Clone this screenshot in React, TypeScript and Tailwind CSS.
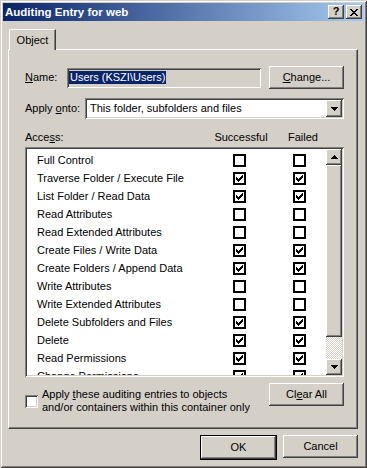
import React from "react";

const raised =
  "shadow-[inset_-1px_-1px_#404040,inset_1px_1px_#ffffff,inset_-2px_-2px_#808080,inset_2px_2px_#d4d0c8]";
const sunken =
  "shadow-[inset_1px_1px_#808080,inset_-1px_-1px_#ffffff,inset_2px_2px_#404040,inset_-2px_-2px_#d4d0c8]";

const rows: [string, boolean, boolean][] = [
  ["Full Control", false, false],
  ["Traverse Folder / Execute File", true, true],
  ["List Folder / Read Data", true, true],
  ["Read Attributes", false, false],
  ["Read Extended Attributes", false, false],
  ["Create Files / Write Data", true, true],
  ["Create Folders / Append Data", true, true],
  ["Write Attributes", false, false],
  ["Write Extended Attributes", false, false],
  ["Delete Subfolders and Files", true, true],
  ["Delete", true, true],
  ["Read Permissions", true, true],
  ["Change Permissions", true, true],
];

function Check() {
  return (
    <svg width="7" height="7" viewBox="0 0 7 7" shapeRendering="crispEdges">
      <path
        fill="#000"
        d="M0 2h1v3h-1z M1 3h1v3h-1z M2 4h1v3h-1z M3 3h1v3h-1z M4 2h1v3h-1z M5 1h1v3h-1z M6 0h1v3h-1z"
      />
    </svg>
  );
}

function FlatBox({ checked }: { checked: boolean }) {
  return (
    <div className="w-[13px] h-[13px] border-2 border-black bg-white flex items-center justify-center shrink-0">
      {checked ? <Check /> : null}
    </div>
  );
}

function Arrow({ up }: { up?: boolean }) {
  return (
    <svg width="7" height="4" viewBox="0 0 7 4" shapeRendering="crispEdges">
      {up ? (
        <path fill="#000" d="M3 0h1v1h-1z M2 1h3v1h-3z M1 2h5v1h-5z M0 3h7v1h-7z" />
      ) : (
        <path fill="#000" d="M0 0h7v1h-7z M1 1h5v1h-5z M2 2h3v1h-3z M3 3h1v1h-1z" />
      )}
    </svg>
  );
}

function Btn({
  children,
  className = "",
}: {
  children: React.ReactNode;
  className?: string;
}) {
  return (
    <div
      className={`h-[23px] w-[75px] bg-[#d4d0c8] ${raised} flex items-center justify-center ${className}`}
    >
      {children}
    </div>
  );
}

export default function App() {
  return (
    <div className="w-[367px] h-[468px] bg-[#d4d0c8] p-[3px] flex flex-col font-['Liberation_Sans',Arial,sans-serif] text-[11px] leading-[13px] text-black shadow-[inset_1px_1px_#d4d0c8,inset_-1px_-1px_#404040,inset_2px_2px_#ffffff,inset_-2px_-2px_#808080] overflow-hidden select-none">
      {/* Title bar */}
      <div className="h-[18px] flex items-center pl-[2px] pr-[2px] bg-[linear-gradient(to_right,#0a246a,#a6caf0)]">
        <div className="flex-1 text-white font-bold text-[11.5px] leading-[14px]">
          Auditing Entry for web
        </div>
        <div className={`w-[16px] h-[14px] bg-[#d4d0c8] ${raised} flex items-center justify-center font-bold text-[11px] leading-[11px] pb-[1px]`}>
          ?
        </div>
        <div className={`ml-[2px] w-[16px] h-[14px] bg-[#d4d0c8] ${raised} flex items-center justify-center`}>
          <svg width="8" height="7" viewBox="0 0 8 7" shapeRendering="crispEdges">
            <path
              fill="#000"
              d="M0 0h2v1h-2z M6 0h2v1h-2z M1 1h2v1h-2z M5 1h2v1h-2z M2 2h4v1h-4z M3 3h2v1h-2z M2 4h4v1h-4z M1 5h2v1h-2z M5 5h2v1h-2z M0 6h2v1h-2z M6 6h2v1h-2z"
            />
          </svg>
        </div>
      </div>

      {/* Body */}
      <div className="pl-[5px] flex flex-col">
        {/* Tab strip */}
        <div className="mt-[8px] flex relative z-10">
          <div className="ml-[1px] w-[47px] h-[21px] mb-[-1px] bg-[#d4d0c8] border-t border-l border-white rounded-tl-[2px] shadow-[inset_-1px_0_#808080] border-r border-r-[#404040] flex items-start justify-center pt-[4px]">
            Object
          </div>
        </div>

        {/* Panel */}
        <div className="w-[350px] h-[380px] border-t border-l border-white border-r border-b border-r-[#404040] border-b-[#404040] shadow-[inset_-1px_-1px_#808080] pl-[16px] pr-[13px] pt-[17px] flex flex-col">
          {/* Name row */}
          <div className="flex items-center h-[21px]">
            <div className="w-[42px]">
              <span className="underline">N</span>ame:
            </div>
            <div className={`w-[194px] h-[20px] bg-[#d4d0c8] ${sunken} flex items-center pl-[2px]`}>
              <span className="bg-[#0a246a] text-white px-[1px] leading-[13px]">
                Users (KSZI\Users)
              </span>
            </div>
            <div className="flex-1" />
            <Btn className="h-[22px]">
              <span>
                <span className="underline">C</span>hange...
              </span>
            </Btn>
          </div>

          {/* Apply onto */}
          <div className="mt-[10px] flex items-center h-[21px]">
            <div className="w-[60px]">
              Apply <span className="underline">o</span>nto:
            </div>
            <div className={`flex-1 h-[21px] bg-white ${sunken} flex items-center p-[2px]`}>
              <div className="flex-1 pl-[3px]">This folder, subfolders and files</div>
              <div className={`w-[16px] h-[17px] bg-[#d4d0c8] ${raised} flex items-center justify-center`}>
                <Arrow />
              </div>
            </div>
          </div>

          {/* Header */}
          <div className="mt-[12px] flex h-[13px]">
            <div className="w-[186px]">
              Acce<span className="underline">s</span>s:
            </div>
            <div className="w-[60px] text-center">Successful</div>
            <div className="ml-[2px] w-[60px] text-center">Failed</div>
          </div>

          {/* List */}
          <div className={`mt-[3px] h-[230px] bg-white ${sunken} p-[2px] flex`}>
            <div className="flex-1 overflow-hidden pt-[2px]">
              {rows.map(([label, s, f]) => (
                <div key={label} className="h-[18px] flex items-center pl-[10px]">
                  <div className="w-[196px] whitespace-nowrap">{label}</div>
                  <FlatBox checked={s} />
                  <div className="w-[47px] shrink-0" />
                  <FlatBox checked={f} />
                </div>
              ))}
            </div>
            <div className="w-[16px] flex flex-col">
              <div className={`h-[16px] bg-[#d4d0c8] ${raised} flex items-center justify-center`}>
                <Arrow up />
              </div>
              <div className={`h-[172px] bg-[#d4d0c8] ${raised}`} />
              <div className="flex-1 bg-[repeating-conic-gradient(#ffffff_0%_25%,#d4d0c8_0%_50%)] bg-[length:2px_2px]" />
              <div className={`h-[16px] bg-[#d4d0c8] ${raised} flex items-center justify-center`}>
                <Arrow />
              </div>
            </div>
          </div>

          {/* Bottom row */}
          <div className="mt-[6px] flex items-start">
            <div className="mt-[5px] flex items-center">
              <div className={`w-[13px] h-[13px] bg-white ${sunken}`} />
              <div className="ml-[4px] leading-[13px] whitespace-nowrap">
                <div>
                  Apply <span className="underline">t</span>hese auditing entries to objects
                </div>
                <div>and/or containers within this container only</div>
              </div>
            </div>
            <div className="flex-1" />
            <Btn className="h-[22px]">
              <span>
                Cl<span className="underline">e</span>ar All
              </span>
            </Btn>
          </div>
        </div>

        {/* OK / Cancel */}
        <div className="w-[350px] mt-[6px] flex justify-end">
          <div className="border border-black">
            <Btn className="w-[74px] h-[21px]">OK</Btn>
          </div>
          <Btn className="ml-[6px]">Cancel</Btn>
        </div>
      </div>
    </div>
  );
}
